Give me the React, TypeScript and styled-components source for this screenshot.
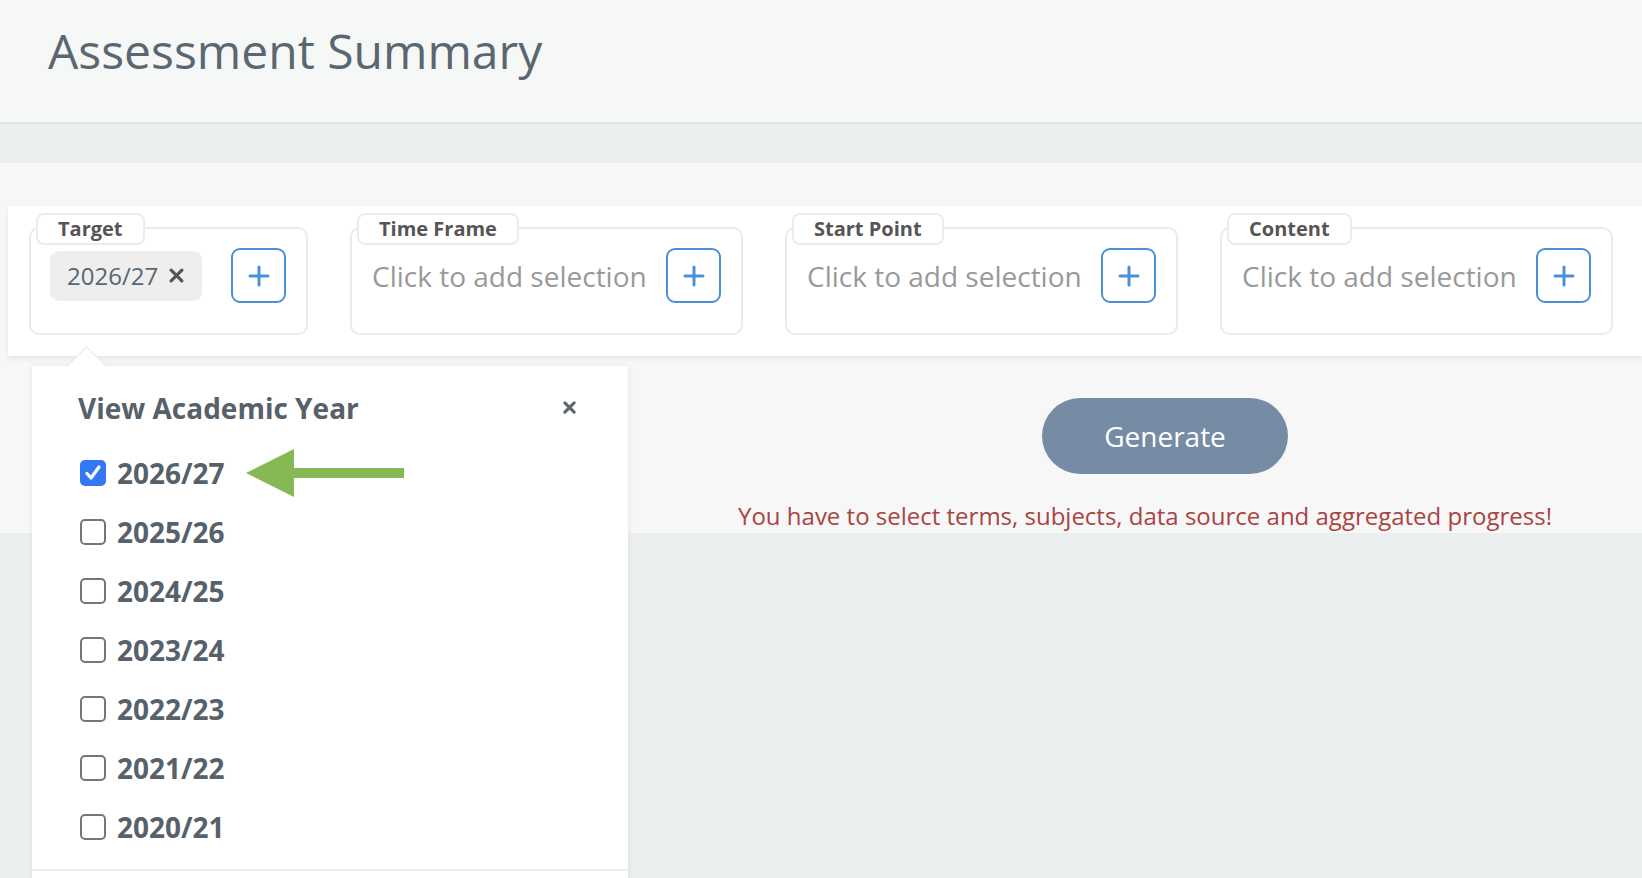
import React from "react";
import styled, { createGlobalStyle } from "styled-components";

const GlobalStyle = createGlobalStyle`
  html, body {
    margin: 0;
    padding: 0;
    background: #eceff0;
    font-family: "Open Sans", "Noto Sans", sans-serif;
    overflow: hidden;
  }
  * {
    box-sizing: border-box;
  }
`;

const Page = styled.div`
  position: relative;
  width: 100%;
  height: 878px;
  overflow: hidden;
`;

const Header = styled.header`
  height: 124px;
  background: #f6f7f7;
  border-bottom: 2px solid #e1e4e6;
  display: flex;
  align-items: center;
  padding: 0 0 22px 48px;
`;

const Title = styled.h1`
  margin: 0;
  font-size: 48px;
  font-weight: 400;
  color: #5b6770;
`;

const Band = styled.div`
  height: 39px;
  background: #eceff0;
`;

const Main = styled.main`
  height: 370px;
  background: #f7f7f7;
  padding-top: 43px;
`;

const FilterCard = styled.section`
  margin-left: 8px;
  background: #ffffff;
  box-shadow: 0 3px 6px rgba(0, 0, 0, 0.07);
  padding: 21px 0 21px 21px;
  display: flex;
  gap: 42px;
`;

const FilterBox = styled.div<{ $width: number }>`
  position: relative;
  width: ${(p) => p.$width}px;
  height: 108px;
  border: 2px solid #ebebeb;
  border-radius: 10px;
  padding: 19px 20px 0 19px;
  display: flex;
  align-items: flex-start;
`;

const BoxLabel = styled.span`
  position: absolute;
  top: -16px;
  left: 5px;
  height: 32px;
  padding: 0 20px;
  background: #ffffff;
  border: 2px solid #ececec;
  border-radius: 8px;
  font-size: 20px;
  font-weight: 700;
  line-height: 28px;
  color: #555555;
`;

const BoxRow = styled.div<{ $gap: number }>`
  display: flex;
  align-items: center;
  height: 55px;
  gap: ${(p) => p.$gap}px;
  flex: 1;
  justify-content: space-between;
`;

const Placeholder = styled.span`
  font-size: 28px;
  color: #999999;
  padding-left: 1px;
  white-space: nowrap;
`;

const Chip = styled.span`
  display: inline-flex;
  align-items: center;
  gap: 11px;
  height: 50px;
  padding: 0 18px 0 17px;
  background: #eeeeee;
  border-radius: 9px;
  font-size: 24px;
  color: #5a6670;
`;

const AddButton = styled.button`
  flex: none;
  width: 55px;
  height: 55px;
  border: 2px solid #4a90d9;
  border-radius: 9px;
  background: #ffffff;
  display: flex;
  align-items: center;
  justify-content: center;
  padding: 0;
  cursor: pointer;
`;

const Actions = styled.div`
  display: grid;
  grid-template-columns: 648px 1fr;
  padding-top: 42px;
`;

const ActionColumn = styled.div`
  grid-column: 2;
  display: flex;
  flex-direction: column;
  align-items: center;
  gap: 26px;
`;

const GenerateButton = styled.button`
  width: 246px;
  height: 76px;
  margin-left: 40px;
  border: none;
  border-radius: 38px;
  background: #768ca5;
  color: #ffffff;
  font-family: inherit;
  font-size: 28px;
  cursor: pointer;
`;

const ErrorText = styled.p`
  margin: 0;
  font-size: 24px;
  line-height: 32px;
  color: #a94442;
`;

const Popover = styled.div`
  position: absolute;
  left: 32px;
  top: 366px;
  width: 596px;
  background: #ffffff;
  box-shadow: 0 0 6px rgba(0, 0, 0, 0.08);

  &::before {
    content: "";
    position: absolute;
    top: -14px;
    left: 40px;
    width: 28px;
    height: 28px;
    background: #ffffff;
    border-top: 1px solid #e8e8e8;
    border-left: 1px solid #e8e8e8;
    transform: rotate(45deg);
  }
`;

const PopoverBody = styled.div`
  position: relative;
  padding: 22px 51px 13px 46px;
`;

const PopoverHead = styled.div`
  display: flex;
  align-items: center;
  justify-content: space-between;
  margin-bottom: 15px;
`;

const PopoverTitle = styled.h2`
  margin: 0;
  font-size: 28px;
  line-height: 40px;
  font-weight: 700;
  color: #56616a;
`;

const CloseButton = styled.button`
  border: none;
  background: none;
  padding: 0;
  width: 14px;
  height: 14px;
  display: flex;
  cursor: pointer;
`;

const YearRow = styled.label`
  display: flex;
  align-items: center;
  height: 59px;
  gap: 11px;
  font-size: 28px;
  font-weight: 700;
  color: #56616a;
  cursor: pointer;
`;

const Box = styled.span<{ $checked: boolean }>`
  flex: none;
  width: 26px;
  height: 26px;
  margin-left: 2px;
  border-radius: 5px;
  border: 2px solid ${(p) => (p.$checked ? "#3478f6" : "#767676")};
  background: ${(p) => (p.$checked ? "#3478f6" : "#ffffff")};
  display: flex;
  align-items: center;
  justify-content: center;
`;

const PopoverFooter = styled.div`
  height: 60px;
  border-top: 2px solid #eceeef;
`;

const Arrow = styled.svg`
  margin-left: 10px;
  flex: none;
`;

const filters = [
  { label: "Target", width: 279 },
  { label: "Time Frame", width: 393 },
  { label: "Start Point", width: 393 },
  { label: "Content", width: 393 },
];

const years = ["2026/27", "2025/26", "2024/25", "2023/24", "2022/23", "2021/22", "2020/21"];

const PlusIcon = () => (
  <svg width="24" height="24" viewBox="0 0 24 24">
    <path d="M12 3v18M3 12h18" stroke="#4a90d9" strokeWidth="3" strokeLinecap="round" />
  </svg>
);

const CrossIcon = ({ size, color, width }: { size: number; color: string; width: number }) => (
  <svg width={size} height={size} viewBox="0 0 14 14">
    <path d="M2 2l10 10M12 2L2 12" stroke={color} strokeWidth={width} strokeLinecap="round" />
  </svg>
);

const CheckIcon = () => (
  <svg width="20" height="20" viewBox="0 0 20 20">
    <path d="M4 10.5l4 4.5 8-11" fill="none" stroke="#ffffff" strokeWidth="3.2" strokeLinecap="round" strokeLinejoin="round" />
  </svg>
);

const PointerArrow = () => (
  <Arrow width="158" height="48" viewBox="0 0 158 48">
    <polygon points="0,24 48,0 48,19 158,19 158,29 48,29 48,48" fill="#86b853" />
  </Arrow>
);

export default function App() {
  return (
    <Page>
      <GlobalStyle />
      <Header>
        <Title>Assessment Summary</Title>
      </Header>
      <Band />
      <Main>
        <FilterCard>
          {filters.map((f) => {
            const hasChip = f.label === "Target";
            return (
              <FilterBox key={f.label} $width={f.width}>
                <BoxLabel>{f.label}</BoxLabel>
                <BoxRow $gap={hasChip ? 26 : 12}>
                  {hasChip ? (
                    <Chip>
                      2026/27
                      <CrossIcon size={15} color="#555555" width={3} />
                    </Chip>
                  ) : (
                    <Placeholder>Click to add selection</Placeholder>
                  )}
                  <AddButton aria-label="Add">
                    <PlusIcon />
                  </AddButton>
                </BoxRow>
              </FilterBox>
            );
          })}
        </FilterCard>
        <Actions>
          <ActionColumn>
            <GenerateButton>Generate</GenerateButton>
            <ErrorText>You have to select terms, subjects, data source and aggregated progress!</ErrorText>
          </ActionColumn>
        </Actions>
      </Main>

      <Popover>
        <PopoverBody>
          <PopoverHead>
            <PopoverTitle>View Academic Year</PopoverTitle>
            <CloseButton aria-label="Close">
              <CrossIcon size={13} color="#5a6670" width={3.2} />
            </CloseButton>
          </PopoverHead>
          {years.map((y, i) => (
            <YearRow key={y}>
              <Box $checked={i === 0}>{i === 0 && <CheckIcon />}</Box>
              {y}
              {i === 0 && <PointerArrow />}
            </YearRow>
          ))}
        </PopoverBody>
        <PopoverFooter />
      </Popover>
    </Page>
  );
}
